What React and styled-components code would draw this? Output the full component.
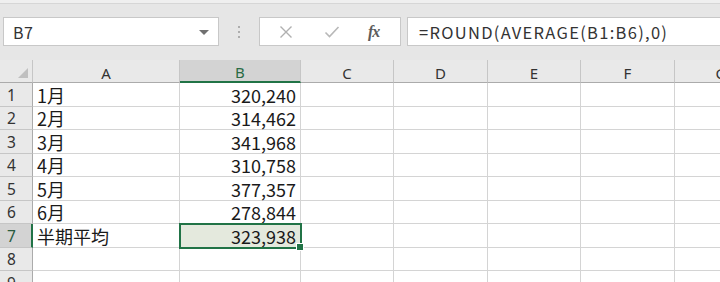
import React from "react";
import styled, { createGlobalStyle } from "styled-components";

const Global = createGlobalStyle`
  html, body { margin: 0; padding: 0; background: #ffffff; overflow: hidden; }
  body { font-family: "Noto Sans CJK JP", "Noto Sans", sans-serif; }
`;

const Page = styled.div`
  width: 720px;
  height: 282px;
  overflow: hidden;
  display: flex;
  flex-direction: column;
  background: #ffffff;
  & > * { flex-shrink: 0; }
`;

const TopStrip = styled.div`
  height: 3px;
  background: #efefef;
  border-bottom: 1px solid #d6d6d6;
`;

const FormulaBar = styled.div`
  height: 56px;
  box-sizing: border-box;
  background: #e6e6e6;
  display: flex;
  align-items: flex-start;
  padding: 13px 0 0 3px;
`;

const NameBox = styled.div`
  width: 216px;
  height: 29px;
  box-sizing: border-box;
  background: #ffffff;
  border: 1px solid #c8c8c8;
  display: flex;
  align-items: center;
  justify-content: space-between;
  padding: 0 9px 0 9px;
  font-family: "Noto Sans CJK JP", sans-serif;
  font-size: 16px;
  letter-spacing: 0.5px;
  color: #333;
`;

const DropArrow = styled.span`
  width: 0;
  height: 0;
  border-left: 5px solid transparent;
  border-right: 5px solid transparent;
  border-top: 5px solid #707070;
  margin-top: 1px;
`;

const Dots = styled.div`
  width: 40px;
  height: 29px;
  display: flex;
  flex-direction: column;
  align-items: center;
  justify-content: center;
  gap: 3px;
  & > span {
    width: 2px;
    height: 2px;
    background: #9a9a9a;
    border-radius: 1px;
  }
`;

const ButtonBox = styled.div`
  width: 142px;
  height: 29px;
  box-sizing: border-box;
  background: #ffffff;
  border: 1px solid #c8c8c8;
  display: flex;
  align-items: center;
  padding-left: 19px;
`;

const IconSlot = styled.div`
  width: ${(p) => p.$w}px;
  display: flex;
  align-items: center;
  justify-content: flex-start;
`;

const Fx = styled.span`
  font-family: "Liberation Serif", "DejaVu Serif", serif;
  font-style: italic;
  font-weight: bold;
  font-size: 16px;
  color: #5c5c5c;
  letter-spacing: -1px;
`;

const FormulaInput = styled.div`
  flex: 1;
  height: 29px;
  box-sizing: border-box;
  margin-left: 6px;
  background: #ffffff;
  border: 1px solid #c8c8c8;
  border-right: none;
  display: flex;
  align-items: center;
  padding-left: 11px;
  font-family: "Noto Sans CJK JP", sans-serif;
  font-size: 16.5px;
  letter-spacing: 1.3px;
  color: #333;
  white-space: nowrap;
`;

const Sheet = styled.div`
  display: grid;
  grid-template-columns: 33px 147px 121px 93px 94px 93px 94px 93px;
  grid-template-rows: 23px repeat(9, 23.5px);
  background: #ffffff;
`;

const Corner = styled.div`
  background: #e9e9e9;
  border-right: 1px solid #c6c6c6;
  border-bottom: 1px solid #ababab;
  box-sizing: border-box;
  position: relative;
  &::after {
    content: "";
    position: absolute;
    right: 4px;
    bottom: 4px;
    width: 0;
    height: 0;
    border-left: 10px solid transparent;
    border-bottom: 10px solid #c0c0c0;
  }
`;

const ColHead = styled.div`
  box-sizing: border-box;
  background: ${(p) => (p.$active ? "#d3d3d3" : "#e9e9e9")};
  border-right: 1px solid #c6c6c6;
  border-bottom: ${(p) => (p.$active ? "2px solid #217346" : "1px solid #ababab")};
  display: flex;
  align-items: center;
  justify-content: center;
  padding-top: 3px;
  font-family: "Noto Sans", sans-serif;
  font-size: 15px;
  color: ${(p) => (p.$active ? "#2a6b45" : "#333")};
`;

const RowHead = styled.div`
  box-sizing: border-box;
  background: ${(p) => (p.$active ? "#d3d3d3" : "#e9e9e9")};
  border-right: ${(p) => (p.$active ? "2px solid #217346" : "1px solid #ababab")};
  border-bottom: 1px solid #c6c6c6;
  display: flex;
  align-items: flex-end;
  padding: 0 0 1px 7px;
  font-family: "Noto Sans", sans-serif;
  font-size: 15.5px;
  line-height: 20px;
  color: ${(p) => (p.$active ? "#2a5c3f" : "#333")};
`;

const Cell = styled.div`
  box-sizing: border-box;
  border-right: 1px solid #d4d4d4;
  border-bottom: 1px solid #d4d4d4;
  display: flex;
  align-items: flex-end;
  justify-content: ${(p) => (p.$num ? "flex-end" : "flex-start")};
  padding: 0 4px 0 4px;
  font-family: "Noto Sans CJK JP", sans-serif;
  font-size: 18px;
  line-height: 21px;
  color: #1a1a1a;
  white-space: nowrap;
  position: relative;
  background: ${(p) => (p.$selected ? "#e4e9dd" : "#ffffff")};
  ${(p) =>
    p.$selected &&
    `
    outline: 2px solid #217346;
    outline-offset: -1px;
    z-index: 2;
    &::after {
      content: "";
      position: absolute;
      right: -4px;
      bottom: -4px;
      width: 6px;
      height: 6px;
      background: #217346;
      border: 1px solid #ffffff;
    }
  `}
`;

const cols = ["A", "B", "C", "D", "E", "F", "G"];
const data = [
  ["1月", "320,240"],
  ["2月", "314,462"],
  ["3月", "341,968"],
  ["4月", "310,758"],
  ["5月", "377,357"],
  ["6月", "278,844"],
  ["半期平均", "323,938"],
  ["", ""],
  ["", ""],
];

const XIcon = () => (
  <svg width="14" height="14" viewBox="0 0 14 14">
    <path d="M1.5 1.5 L12.5 12.5 M12.5 1.5 L1.5 12.5" stroke="#b0b0b0" strokeWidth="1.4" fill="none" />
  </svg>
);

const CheckIcon = () => (
  <svg width="16" height="14" viewBox="0 0 16 14">
    <path d="M1.5 7.5 L5.5 11.5 L14.5 2" stroke="#b8b8b8" strokeWidth="1.6" fill="none" />
  </svg>
);

export default function App() {
  return (
    <Page>
      <Global />
      <TopStrip />
      <FormulaBar>
        <NameBox>
          <span>B7</span>
          <DropArrow />
        </NameBox>
        <Dots>
          <span />
          <span />
          <span />
        </Dots>
        <ButtonBox>
          <IconSlot $w={45}>
            <XIcon />
          </IconSlot>
          <IconSlot $w={44}>
            <CheckIcon />
          </IconSlot>
          <IconSlot $w={30}>
            <Fx>fx</Fx>
          </IconSlot>
        </ButtonBox>
        <FormulaInput>=ROUND(AVERAGE(B1:B6),0)</FormulaInput>
      </FormulaBar>
      <Sheet>
        <Corner />
        {cols.map((c) => (
          <ColHead key={c} $active={c === "B"}>
            {c}
          </ColHead>
        ))}
        {data.map((row, i) => (
          <React.Fragment key={i}>
            <RowHead $active={i === 6}>{i + 1}</RowHead>
            <Cell>{row[0]}</Cell>
            <Cell $num $selected={i === 6}>
              {row[1]}
            </Cell>
            {cols.slice(2).map((c) => (
              <Cell key={c} />
            ))}
          </React.Fragment>
        ))}
      </Sheet>
    </Page>
  );
}
